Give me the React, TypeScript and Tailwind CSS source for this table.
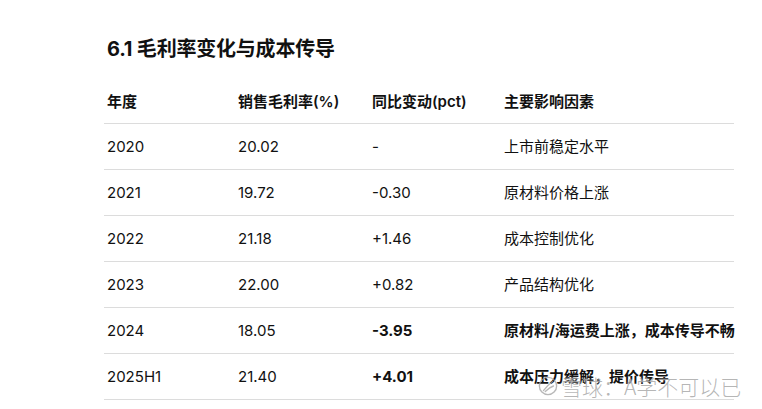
import React from 'react';

type Row = {
  year: string;
  margin: string;
  change: string;
  reason: string;
  strong?: boolean;
};

const rows: Row[] = [
  { year: '2020', margin: '20.02', change: '-', reason: '上市前稳定水平' },
  { year: '2021', margin: '19.72', change: '-0.30', reason: '原材料价格上涨' },
  { year: '2022', margin: '21.18', change: '+1.46', reason: '成本控制优化' },
  { year: '2023', margin: '22.00', change: '+0.82', reason: '产品结构优化' },
  {
    year: '2024',
    margin: '18.05',
    change: '-3.95',
    reason: '原材料/海运费上涨，成本传导不畅',
    strong: true,
  },
  {
    year: '2025H1',
    margin: '21.40',
    change: '+4.01',
    reason: '成本压力缓解，提价传导',
    strong: true,
  },
];

const cols = 'grid grid-cols-[131px_134px_132px_230px] pl-[3px] items-center';

export default function App() {
  return (
    <div className="relative w-[762px] h-[409px] overflow-hidden bg-white text-[#111] font-['Inter','Noto_Sans_CJK_SC',sans-serif]">
      <div className="pl-[104px] pt-[35px] w-[734px]">
        {/* TITLE */}
        <h2 className="pl-[3px] text-[20px] leading-[28px] font-bold tracking-[-0.2px]">
          6.1 毛利率变化与成本传导
        </h2>

        {/* TABLE */}
        <div className="mt-[16px] w-[630px]">
          <div className={`${cols} h-[45px] pt-[2px] border-b border-[#dcdcdc] text-[15px] font-semibold`}>
            <div>年度</div>
            <div>销售毛利率(%)</div>
            <div>同比变动(pct)</div>
            <div>主要影响因素</div>
          </div>
          {rows.map((row) => (
            <div
              key={row.year}
              className={`${cols} h-[46px] pt-[2px] border-b border-[#dcdcdc] text-[15px]`}
            >
              <div>{row.year}</div>
              <div>{row.margin}</div>
              <div className={row.strong ? 'font-bold' : ''}>{row.change}</div>
              <div className={row.strong ? 'font-bold whitespace-nowrap' : 'whitespace-nowrap'}>
                {row.reason}
              </div>
            </div>
          ))}
        </div>
      </div>

      {/* WATERMARK */}
      <div className="absolute left-[538px] top-[372px] flex items-center gap-[3px] text-[21px] leading-[28px] text-[rgba(150,150,150,0.7)] [text-shadow:0_0_2px_#fff] font-['Noto_Sans_CJK_SC',sans-serif] font-light whitespace-nowrap">
        <svg width="20" height="20" viewBox="0 0 22 22" fill="none">
          <circle cx="11" cy="11" r="9.5" stroke="rgba(160,160,160,0.75)" strokeWidth="1.5" />
          <path
            d="M6 16 C 9 12, 12 9, 16 6 M8 17 C 11 14, 14 12, 17 11"
            stroke="rgba(160,160,160,0.75)"
            strokeWidth="1.5"
            strokeLinecap="round"
          />
        </svg>
        <span>雪球：A学不可以已</span>
      </div>
    </div>
  );
}
